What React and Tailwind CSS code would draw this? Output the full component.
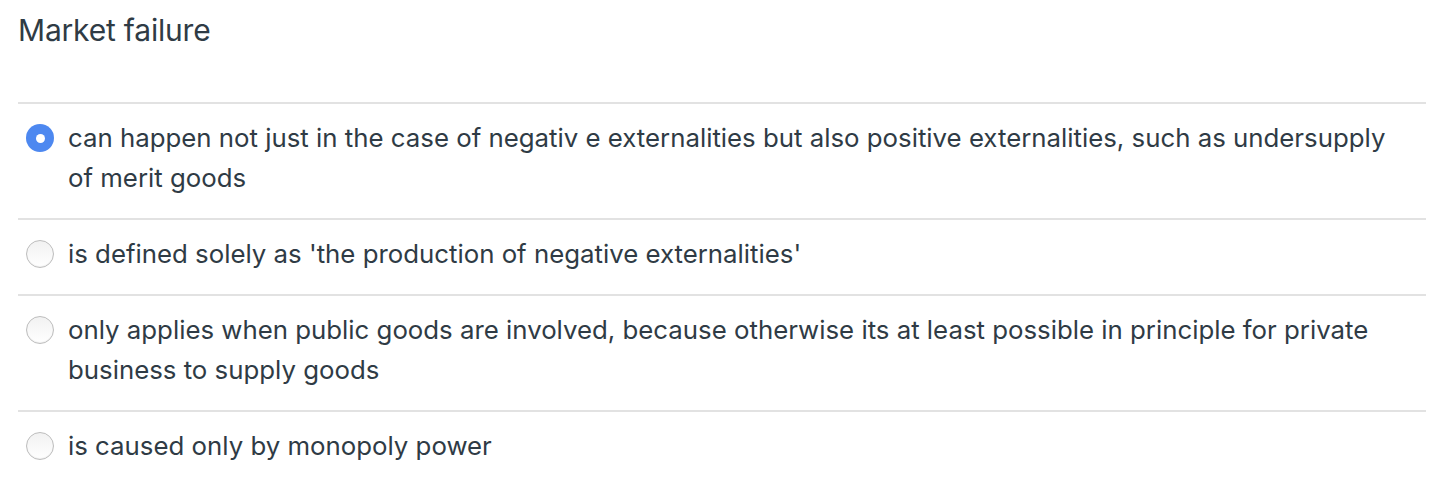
import React from "react";

const options = [
  {
    text: "can happen not just in the case of negativ e externalities but also positive externalities, such as undersupply of merit goods",
    selected: true,
  },
  { text: "is defined solely as 'the production of negative externalities'", selected: false },
  {
    text: "only applies when public goods are involved, because otherwise its at least possible in principle for private business to supply goods",
    selected: false,
  },
  { text: "is caused only by monopoly power", selected: false },
];

function Radio({ selected }) {
  if (selected) {
    return (
      <span className="mt-[6px] flex h-[28px] w-[28px] shrink-0 items-center justify-center rounded-full bg-[#4d88f0]">
        <span className="h-[9px] w-[9px] rounded-full bg-white" />
      </span>
    );
  }
  return (
    <span className="mt-[6px] h-[28px] w-[28px] shrink-0 rounded-full border border-[#bdbdbd] bg-gradient-to-b from-[#f2f2f2] to-white shadow-[inset_0_-1px_1px_rgba(0,0,0,0.06)]" />
  );
}

export default function App() {
  return (
    <div className="min-h-[498px] bg-white font-['Inter',sans-serif] text-[#2f3b45]">
      <div className="pl-[18px] pr-[10px] pt-[10px]">
        <h1 className="text-[30px] leading-[40px] font-normal tracking-[-0.2px]">Market failure</h1>
        <div className="mt-[52px] border-t-2 border-[#e2e2e2]">
          {options.map((o, i) => (
            <div
              key={i}
              className={`flex gap-[14px] pl-[8px] pt-[14px] pb-[20px] ${i < options.length - 1 ? "border-b-2 border-[#e2e2e2]" : ""}`}
            >
              <Radio selected={o.selected} />
              <p className="text-[25.8px] leading-[40px] pr-[12px]">{o.text}</p>
            </div>
          ))}
        </div>
      </div>
    </div>
  );
}
